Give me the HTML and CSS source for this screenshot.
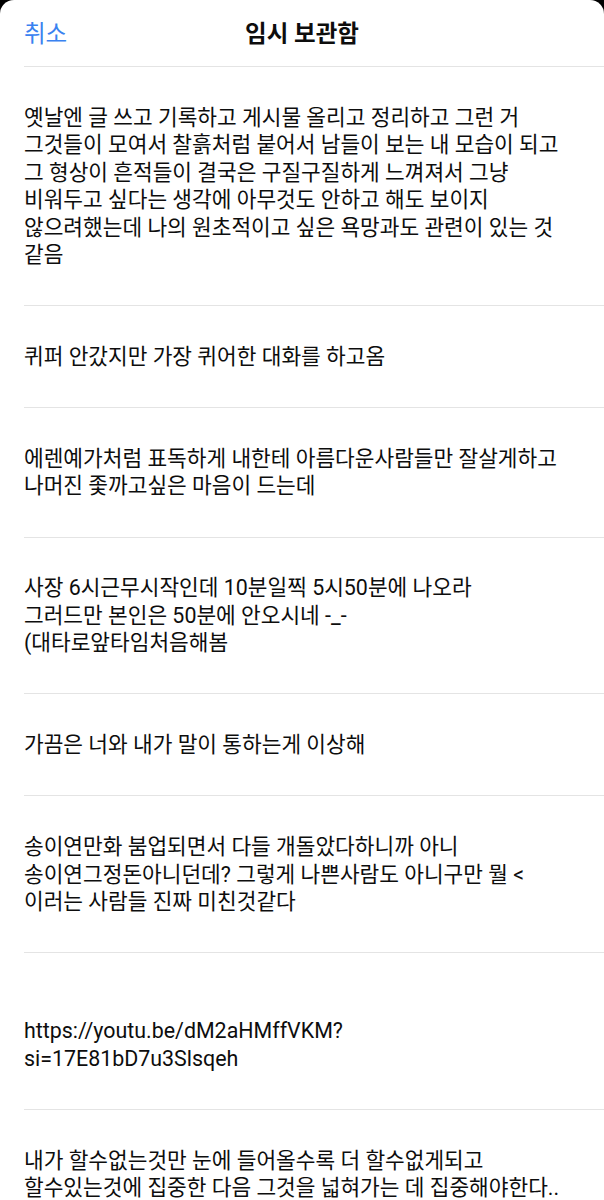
FILE: index.html
```html
<!DOCTYPE html>
<html lang="ko">
<head>
<meta charset="utf-8">
<title>임시 보관함</title>
<link rel="stylesheet" href="styles.css">
</head>
<body>
<div class="sheet">
  <header class="topbar">
    <span class="cancel">취소</span>
    <h1 class="title">임시 보관함</h1>
  </header>
  <ul class="drafts">
    <li class="draft">옛날엔 글 쓰고 기록하고 게시물 올리고 정리하고 그런 거<br>그것들이 모여서 찰흙처럼 붙어서 남들이 보는 내 모습이 되고<br>그 형상이 흔적들이 결국은 구질구질하게 느껴져서 그냥<br>비워두고 싶다는 생각에 아무것도 안하고 해도 보이지<br>않으려했는데 나의 원초적이고 싶은 욕망과도 관련이 있는 것<br>같음</li>
    <li class="draft">퀴퍼 안갔지만 가장 퀴어한 대화를 하고옴</li>
    <li class="draft">에렌예가처럼 표독하게 내한테 아름다운사람들만 잘살게하고<br>나머진 좇까고싶은 마음이 드는데</li>
    <li class="draft">사장 6시근무시작인데 10분일찍 5시50분에 나오라<br>그러드만 본인은 50분에 안오시네 -_-<br>(대타로앞타임처음해봄</li>
    <li class="draft">가끔은 너와 내가 말이 통하는게 이상해</li>
    <li class="draft">송이연만화 붐업되면서 다들 개돌았다하니까 아니<br>송이연그정돈아니던데? 그렇게 나쁜사람도 아니구만 뭘 &lt;<br>이러는 사람들 진짜 미친것같다</li>
    <li class="draft"><br>https://youtu.be/dM2aHMffVKM?<br>si=17E81bD7u3Slsqeh</li>
    <li class="draft">내가 할수없는것만 눈에 들어올수록 더 할수없게되고<br>할수있는것에 집중한 다음 그것을 넓혀가는 데 집중해야한다..</li>
  </ul>
</div>
</body>
</html>
```

FILE: styles.css
```css
* { box-sizing: border-box; }
html, body {
  margin: 0;
  padding: 0;
  background: #000;
}
body {
  font-family: Roboto, "Noto Sans CJK KR", sans-serif;
  color: #0d0d0d;
}
.sheet {
  background: #fff;
  border-radius: 14px 14px 0 0;
  min-height: 1200px;
  overflow: hidden;
}
.topbar {
  position: relative;
  height: 67px;
  display: flex;
  align-items: center;
  justify-content: center;
  margin-left: 24px;
  border-bottom: 1px solid #e4e4e4;
}
.cancel {
  position: absolute;
  left: 0;
  top: 50%;
  transform: translateY(-52%);
  color: #3a82f0;
  font-size: 23.5px;
}
.title {
  margin: 0 0 2px;
  font-size: 23.5px;
  font-weight: 700;
  color: #0d0d0d;
  padding-right: 24px;
}
.drafts {
  list-style: none;
  margin: 0;
  padding: 0 0 0 24px;
}
.draft {
  padding: 36.75px 0;
  border-bottom: 1px solid #e4e4e4;
  font-size: 21.4px;
  line-height: 27.45px;
  white-space: nowrap;
}
```
